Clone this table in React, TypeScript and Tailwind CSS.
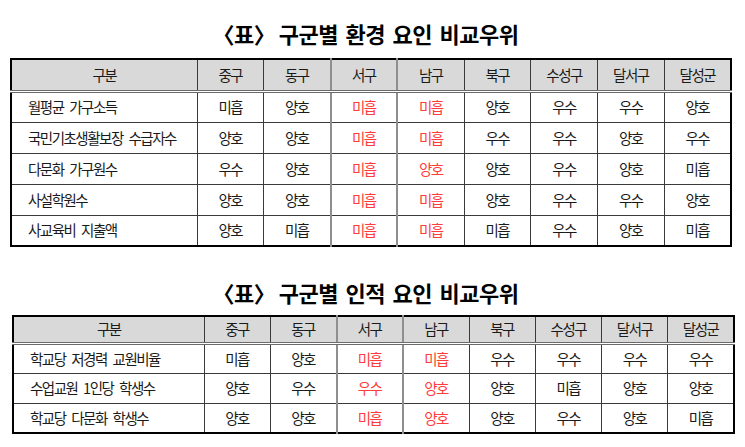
import React from "react"

type Cell = { v: string; red?: boolean }

const districts = ["중구", "동구", "서구", "남구", "북구", "수성구", "달서구", "달성군"]

const envRows: { label: string; cells: Cell[] }[] = [
  {
    label: "월평균 가구소득",
    cells: [{ v: "미흡" }, { v: "양호" }, { v: "미흡", red: true }, { v: "미흡", red: true }, { v: "양호" }, { v: "우수" }, { v: "우수" }, { v: "양호" }],
  },
  {
    label: "국민기초생활보장 수급자수",
    cells: [{ v: "양호" }, { v: "양호" }, { v: "미흡", red: true }, { v: "미흡", red: true }, { v: "우수" }, { v: "우수" }, { v: "양호" }, { v: "우수" }],
  },
  {
    label: "다문화 가구원수",
    cells: [{ v: "우수" }, { v: "양호" }, { v: "미흡", red: true }, { v: "양호", red: true }, { v: "양호" }, { v: "우수" }, { v: "양호" }, { v: "미흡" }],
  },
  {
    label: "사설학원수",
    cells: [{ v: "양호" }, { v: "양호" }, { v: "미흡", red: true }, { v: "미흡", red: true }, { v: "양호" }, { v: "우수" }, { v: "우수" }, { v: "양호" }],
  },
  {
    label: "사교육비 지출액",
    cells: [{ v: "양호" }, { v: "미흡" }, { v: "미흡", red: true }, { v: "미흡", red: true }, { v: "미흡" }, { v: "우수" }, { v: "양호" }, { v: "미흡" }],
  },
]

const humanRows: { label: string; cells: Cell[] }[] = [
  {
    label: "학교당 저경력 교원비율",
    cells: [{ v: "미흡" }, { v: "양호" }, { v: "미흡", red: true }, { v: "미흡", red: true }, { v: "우수" }, { v: "우수" }, { v: "우수" }, { v: "우수" }],
  },
  {
    label: "수업교원 1인당 학생수",
    cells: [{ v: "양호" }, { v: "우수" }, { v: "우수", red: true }, { v: "양호", red: true }, { v: "양호" }, { v: "미흡" }, { v: "양호" }, { v: "양호" }],
  },
  {
    label: "학교당 다문화 학생수",
    cells: [{ v: "양호" }, { v: "양호" }, { v: "미흡", red: true }, { v: "양호", red: true }, { v: "양호" }, { v: "우수" }, { v: "양호" }, { v: "미흡" }],
  },
]

function colBorder(i: number) {
  // 서구, 남구 columns have the heavier grey rule on their left
  if (i === 2 || i === 3) return "border-l-2 border-l-[#8f8f8f]"
  return "border-l border-l-[#3a3a3a]"
}

function CompareTable({
  rows,
  firstCol,
  headH,
  rowH,
  className,
}: {
  rows: { label: string; cells: Cell[] }[]
  firstCol: string
  headH: string
  rowH: string
  className: string
}) {
  return (
    <table className={`table-fixed border-collapse border-2 border-black ${className}`}>
      <colgroup>
        <col className={firstCol} />
        {districts.map((d) => (
          <col key={d} />
        ))}
      </colgroup>
      <thead>
        <tr className={`${headH} bg-[#d9d9d9] border-b-[3px] border-double border-b-[#6b6b6b]`}>
          <th className="font-normal text-center">구분</th>
          {districts.map((d, i) => (
            <th key={d} className={`font-normal text-center ${colBorder(i)}`}>
              {d}
            </th>
          ))}
        </tr>
      </thead>
      <tbody>
        {rows.map((r, ri) => (
          <tr key={r.label} className={`${rowH} ${ri > 0 ? "border-t border-t-[#3a3a3a]" : ""}`}>
            <td className="pl-[16px] text-left">{r.label}</td>
            {r.cells.map((c, i) => (
              <td
                key={i}
                className={`text-center ${colBorder(i)} ${c.red ? "text-[#ff3c3c]" : "text-[#1a1a1a]"}`}
              >
                {c.v}
              </td>
            ))}
          </tr>
        ))}
      </tbody>
    </table>
  )
}

function Title({ children, className }: { children: React.ReactNode; className: string }) {
  return (
    <h2
      className={`h-[26px] leading-[26px] pr-[14px] text-center text-[22px] font-bold tracking-[-0.5px] [word-spacing:3px] text-black ${className}`}
    >
      {children}
    </h2>
  )
}

export default function App() {
  return (
    <div
      className="w-[745px] h-[447px] bg-white text-[#1a1a1a] text-[14.5px] tracking-[-1.5px] [word-spacing:4px] overflow-hidden"
      style={{ fontFamily: '"Noto Sans CJK KR", "Noto Sans", sans-serif' }}
    >
      <div className="flex flex-col">
        <Title className="mt-[20px]">
          〈표〉<span className="-ml-[4px]"> 구군별 환경 요인 비교우위</span>
        </Title>
        <div className="mt-[12px] pl-[10px]">
          <CompareTable
            rows={envRows}
            firstCol="w-[186px]"
            headH="h-[32px]"
            rowH="h-[31px]"
            className="w-[722px]"
          />
        </div>
        <Title className="mt-[32px]">
          〈표〉<span className="-ml-[4px]"> 구군별 인적 요인 비교우위</span>
        </Title>
        <div className="mt-[10px] pl-[12px]">
          <CompareTable
            rows={humanRows}
            firstCol="w-[191px]"
            headH="h-[27px]"
            rowH="h-[30px]"
            className="w-[723px]"
          />
        </div>
      </div>
    </div>
  )
}
